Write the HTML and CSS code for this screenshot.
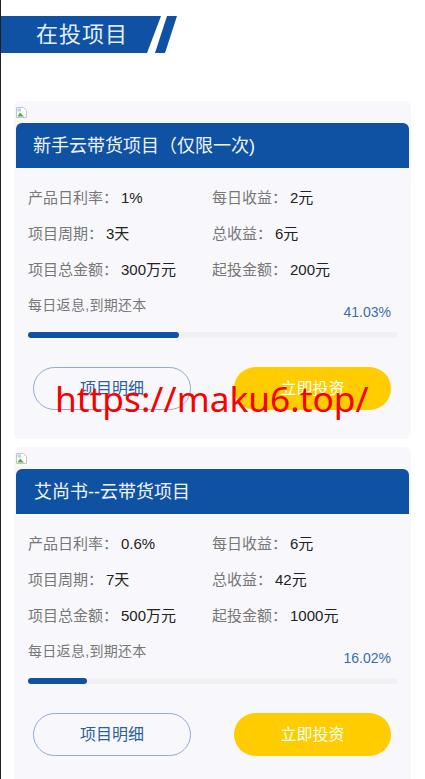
FILE: index.html
```html
<!DOCTYPE html>
<html lang="zh-CN">
<head>
    <meta charset="UTF-8">
    <meta name="viewport" content="width=device-width, initial-scale=1.0">
    <title>在投项目</title>
    <link rel="stylesheet" href="styles.css">
</head>
<body>
    <div class="page">
        <div class="banner">
            <div class="banner-main">在投项目</div>
            <div class="banner-slash"></div>
        </div>

        <div class="card">
            <svg class="broken-img" width="11" height="11" viewBox="0 0 11 11">
                <path d="M0.5 0.5H7.5L10.5 3.5V10.5H0.5Z" fill="#fff" stroke="#c4c4c4"/>
                <path d="M1.5 9.5L4 5.5L6 7.5L8 9.5Z" fill="#5aa84a"/>
                <path d="M1.5 1.5H5V4.5H1.5Z" fill="#b9cdf0"/>
            </svg>
            <div class="card-title title-first">新手云带货项目（仅限一次)</div>
            <div class="info">
                <div class="info-item"><span class="label">产品日利率：</span>1%</div>
                <div class="info-item"><span class="label">每日收益：</span>2元</div>
                <div class="info-item"><span class="label">项目周期：</span>3天</div>
                <div class="info-item"><span class="label">总收益：</span>6元</div>
                <div class="info-item"><span class="label">项目总金额：</span>300万元</div>
                <div class="info-item"><span class="label">起投金额：</span>200元</div>
            </div>
            <div class="note-row">
                <span class="note">每日返息,到期还本</span>
                <span class="percent">41.03%</span>
            </div>
            <div class="progress"><div class="progress-bar" style="width: 41.03%"></div></div>
            <div class="actions">
                <a class="btn btn-detail">项目明细</a>
                <a class="btn btn-invest">立即投资</a>
            </div>
        </div>

        <div class="card">
            <svg class="broken-img" width="11" height="11" viewBox="0 0 11 11">
                <path d="M0.5 0.5H7.5L10.5 3.5V10.5H0.5Z" fill="#fff" stroke="#c4c4c4"/>
                <path d="M1.5 9.5L4 5.5L6 7.5L8 9.5Z" fill="#5aa84a"/>
                <path d="M1.5 1.5H5V4.5H1.5Z" fill="#b9cdf0"/>
            </svg>
            <div class="card-title">艾尚书--云带货项目</div>
            <div class="info">
                <div class="info-item"><span class="label">产品日利率：</span>0.6%</div>
                <div class="info-item"><span class="label">每日收益：</span>6元</div>
                <div class="info-item"><span class="label">项目周期：</span>7天</div>
                <div class="info-item"><span class="label">总收益：</span>42元</div>
                <div class="info-item"><span class="label">项目总金额：</span>500万元</div>
                <div class="info-item"><span class="label">起投金额：</span>1000元</div>
            </div>
            <div class="note-row">
                <span class="note">每日返息,到期还本</span>
                <span class="percent">16.02%</span>
            </div>
            <div class="progress"><div class="progress-bar" style="width: 16.02%"></div></div>
            <div class="actions">
                <a class="btn btn-detail">项目明细</a>
                <a class="btn btn-invest">立即投资</a>
            </div>
        </div>

        <div class="watermark">https://maku6.top/</div>
    </div>
</body>
</html>
```

FILE: styles.css
```css
html, body {
    margin: 0;
    padding: 0;
    height: 779px;
    overflow: hidden;
    background: #fff;
}
body {
    font-family: "Liberation Sans", "Noto Sans CJK SC", sans-serif;
}
.page {
    position: relative;
    box-sizing: border-box;
    width: 425px;
    height: 779px;
    padding-top: 16px;
    border-left: 1px solid #222;
    overflow: hidden;
}
.banner {
    display: flex;
    height: 37px;
    margin-bottom: 48px;
}
.banner-main {
    width: 160px;
    box-sizing: border-box;
    padding-left: 35px;
    background: #0f52a4;
    color: #e4ecf6;
    font-size: 22px;
    letter-spacing: 1px;
    line-height: 37px;
    clip-path: polygon(0 0, 100% 0, 146px 100%, 0 100%);
}
.banner-slash {
    width: 22px;
    margin-left: -6px;
    background: #0f52a4;
    clip-path: polygon(12px 0, 100% 0, 10px 100%, 0 100%);
}
.card {
    width: 397px;
    height: 338px;
    margin: 0 0 8px 13px;
    padding: 6px 2px 0;
    box-sizing: border-box;
    background: #f8f8fc;
    border-radius: 6px;
}
.broken-img {
    display: block;
    margin-bottom: 5px;
}
.card-title {
    height: 45px;
    padding-left: 18px;
    background: #0f52a4;
    border-radius: 6px 6px 0 0;
    color: #f0f4fa;
    font-size: 18px;
    line-height: 47px;
}
.title-first {
    padding-left: 17px;
}
.info {
    display: grid;
    grid-template-columns: 184px 1fr;
    grid-auto-rows: 36px;
    padding: 12px 0 0 12px;
}
.info-item {
    color: #222;
    font-size: 15px;
    line-height: 36px;
}
.label {
    margin-right: 3px;
    color: #777;
}
.note-row {
    display: flex;
    justify-content: space-between;
    padding: 0 18px 0 12px;
    height: 44px;
}
.note {
    color: #777;
    font-size: 14px;
    line-height: 34px;
    letter-spacing: 0.3px;
}
.percent {
    padding-top: 6px;
    color: #3a6ea8;
    font-size: 14px;
    line-height: 36px;
}
.progress {
    height: 6px;
    margin: 0 12px;
    background: #f0f0f3;
    border-radius: 3px;
}
.progress-bar {
    height: 100%;
    background: #0f52a4;
    border-radius: 3px;
}
.actions {
    display: flex;
    justify-content: space-between;
    padding: 29px 18px 0 17px;
}
.btn {
    width: 157px;
    height: 43px;
    box-sizing: border-box;
    border-radius: 22px;
    font-size: 16px;
    line-height: 43px;
    text-align: center;
}
.btn-detail {
    width: 158px;
    border: 1px solid #93a9d0;
    color: #2c5f9e;
    line-height: 41px;
}
.btn-invest {
    background: #ffcc00;
    color: #fff;
}
.watermark {
    position: absolute;
    top: 371px;
    left: 54px;
    color: #f80000;
    font-family: "Noto Sans", sans-serif;
    font-size: 35.3px;
    line-height: 54px;
    white-space: nowrap;
}
```
